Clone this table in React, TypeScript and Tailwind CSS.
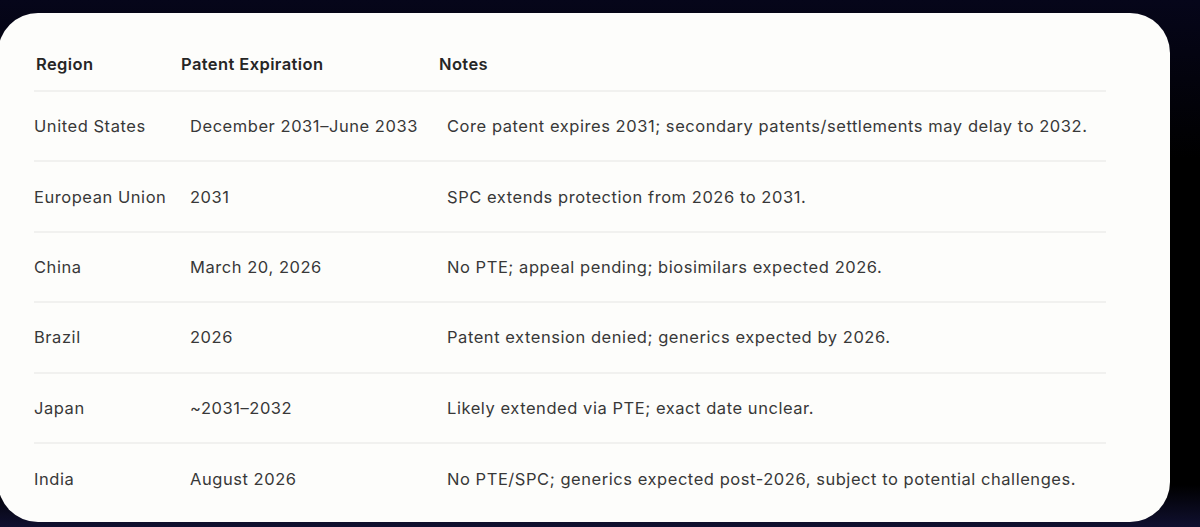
import React from "react";

const rows = [
  ["United States", "December 2031–June 2033", "Core patent expires 2031; secondary patents/settlements may delay to 2032."],
  ["European Union", "2031", "SPC extends protection from 2026 to 2031."],
  ["China", "March 20, 2026", "No PTE; appeal pending; biosimilars expected 2026."],
  ["Brazil", "2026", "Patent extension denied; generics expected by 2026."],
  ["Japan", "~2031–2032", "Likely extended via PTE; exact date unclear."],
  ["India", "August 2026", "No PTE/SPC; generics expected post-2026, subject to potential challenges."],
];

export default function App() {
  return (
    <div
      className="w-[1200px] h-[527px] overflow-hidden bg-[linear-gradient(to_bottom,#06061a_0%,#000_30%,#000_92%,#101030_100%)] pt-[13px] pr-[30px]"
      style={{ fontFamily: "Inter, 'Liberation Sans', sans-serif" }}
    >
      <div className="h-[509px] ml-[-2px] rounded-[40px] bg-[#fdfdfb] pt-[41px] pl-[36px] pr-[60px]">
        <div className="grid grid-cols-[145px_258px_1fr] h-[36px] items-start text-[16.5px] tracking-[0.4px] font-semibold text-[#262626] leading-[20px] pl-[2px]">
          <div>Region</div>
          <div>Patent Expiration</div>
          <div>Notes</div>
        </div>
        <div className="border-t-2 border-[#f1f1ef] mr-[4px]">
          {rows.map((r, i) => (
            <div
              key={i}
              className={`grid grid-cols-[156px_257px_1fr] h-[70.4px] items-center text-[16.5px] tracking-[0.55px] text-[#383838] leading-[20px] ${
                i < rows.length - 1 ? "border-b-2 border-[#f1f1ef]" : ""
              }`}
            >
              <div>{r[0]}</div>
              <div>{r[1]}</div>
              <div>{r[2]}</div>
            </div>
          ))}
        </div>
      </div>
    </div>
  );
}
